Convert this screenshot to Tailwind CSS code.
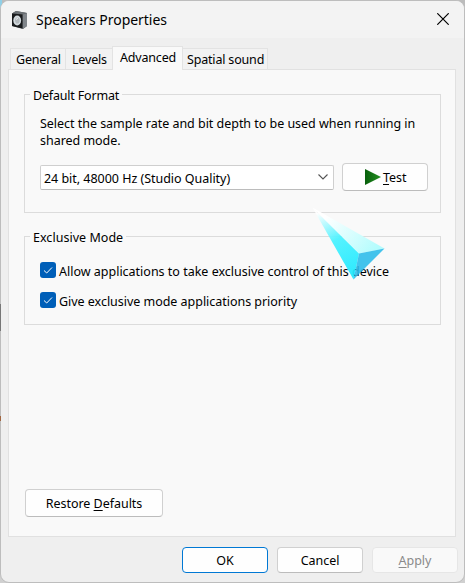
<!DOCTYPE html>
<html lang="en">
<head>
<meta charset="utf-8">
<title>Speakers Properties</title>
<script src="https://cdn.jsdelivr.net/npm/@tailwindcss/browser@4"></script>
</head>
<body class="w-[465px] h-[583px] overflow-hidden bg-[#c9c9c9] font-['Noto_Sans',sans-serif] text-[12.5px] leading-[17px] tracking-[-0.03px] text-black">
<div class="relative w-[465px] h-[583px] bg-linear-to-b from-[#bcbcbc] to-[#d0d0d0]">
  <!-- slivers of the desktop behind the window -->
  <div class="absolute left-0 top-0 w-[2px] h-[28px] bg-[#8fd0e8]"></div>
  <main class="absolute left-0 top-0 w-[465px] h-[583px] rounded-[9px] border border-[#bdbdbd] bg-[#efefef] overflow-hidden flex flex-col">
    <header class="h-[37px] shrink-0 bg-[#f3f3f3] flex items-center pl-[11px] pr-[15px]">
      <svg class="w-[16px] h-[18px] shrink-0" viewBox="0 0 16 18">
        <path d="M0 2.500 4 0 15 2v13l-4 3L0 15z" fill="#55585b"/>
        <path d="M10.500 3.500 15 2v13l-4.500 3z" fill="#80858a"/>
        <path d="M0 2.500 4 0 15 2 10.500 3.500z" fill="#6b7074"/>
        <path d="M0 2.500 10.500 3.500V17.500L0 15z" fill="#191b1d"/>
        <ellipse cx="5.2" cy="9.500" rx="3.900" ry="5" fill="#d3dade"/>
        <ellipse cx="5.400" cy="9.500" rx="2.300" ry="3.100" fill="#b2b8bc"/>
        <path d="M4 8.500 6 7" stroke="#eee"/>
      </svg>
      <h1 class="ml-[8px] mt-px text-[14px] leading-[20px] tracking-[-0.03px] whitespace-nowrap">Speakers Properties</h1>
      <svg class="ml-auto mb-px w-[12px] h-[12px]" viewBox="0 0 12 12" fill="none" stroke="#000" stroke-width="1.2"><path d="M.3.3l11.4 11.4M11.7.3.3 11.7"/></svg>
    </header>
    <nav class="relative z-10 h-[32px] -mb-px shrink-0 pl-[9px] flex items-end whitespace-nowrap tracking-[-0.18px]">
      <div class="w-[55px] h-[21px] mb-px bg-[#f2f2f2] border-t border-l border-[#e3e3e3] pl-[5px] pt-[2px]">General</div>
      <div class="w-[47px] h-[21px] mb-px bg-[#f2f2f2] border-t border-l border-[#e3e3e3] pl-[6px] pt-[2px]">Levels</div>
      <div class="w-[71px] h-[24px] bg-[#f9f9f9] border-t border-x border-[#e3e3e3] pl-[7px] pt-[2px]">Advanced</div>
      <div class="w-[85px] h-[21px] mb-px bg-[#f2f2f2] border-t border-r border-[#e3e3e3] pl-[4px] pt-[2px]">Spatial sound</div>
    </nav>
    <section class="ml-[7px] w-[448px] h-[468px] shrink-0 bg-[#f9f9f9] border border-[#e1e1e1] px-[15px] pt-[24px] flex flex-col">
      <div class="relative w-[417px] h-[119px] shrink-0 border border-[#dcdcdc] pl-[15px] pt-[20px]">
        <h2 class="absolute left-[5px] top-[-8px] px-[3px] bg-[#f9f9f9] whitespace-nowrap tracking-[-0.18px]">Default Format</h2>
        <p class="whitespace-nowrap">Select the sample rate and bit depth to be used when running in<br>shared mode.</p>
        <div class="mt-[14px] flex items-center gap-[8px]">
          <div class="w-[294px] h-[25px] rounded-[2px] border border-[#cfcfcf] border-b-[#bcbcbc] bg-white pl-[3px] pr-[5px] flex items-center justify-between whitespace-nowrap">
            <span class="pt-[2px]">24 bit, 48000 Hz (Studio Quality)</span>
            <svg class="w-[10px] h-[6px]" viewBox="0 0 10 6" fill="none" stroke="#555" stroke-width="1.1"><path d="M.5.5 5 5 9.5.5"/></svg>
          </div>
          <button class="w-[86px] h-[28px] rounded-[4px] border border-[#d0d0d0] border-b-[#bcbcbc] bg-[#fefefe] flex items-center pl-[22px]">
            <svg class="w-[16px] h-[16px]" viewBox="0 0 16 16"><defs><linearGradient id="play"><stop stop-color="#075f0b"/><stop offset="1" stop-color="#259021"/></linearGradient></defs><path d="M0 0 16 8 0 16z" fill="url(#play)"/></svg>
            <span class="ml-[2px]"><span class="underline underline-offset-2">T</span>est</span>
          </button>
        </div>
      </div>
      <div class="relative mt-[23px] w-[417px] h-[89px] shrink-0 border border-[#dcdcdc] pl-[15px] pt-[25px] flex flex-col gap-[14px]">
        <h2 class="absolute left-[5px] top-[-8px] px-[3px] bg-[#f9f9f9] whitespace-nowrap tracking-[0.03px]">Exclusive Mode</h2>
        <label class="h-[16px] flex items-center gap-[3px] whitespace-nowrap tracking-[-0.005px]">
          <svg class="w-[16px] h-[16px] shrink-0" viewBox="0 0 16 16"><rect width="16" height="16" rx="3" fill="#005fb8"/><path d="M4 8.5 6.7 11 12 5.5" fill="none" stroke="#fff"/></svg>
          <span class="pt-[2px]">Allow applications to take exclusive control of this device</span>
        </label>
        <label class="h-[16px] flex items-center gap-[3px] whitespace-nowrap">
          <svg class="w-[16px] h-[16px] shrink-0" viewBox="0 0 16 16"><rect width="16" height="16" rx="3" fill="#005fb8"/><path d="M4 8.5 6.7 11 12 5.5" fill="none" stroke="#fff"/></svg>
          <span class="pt-[2px]">Give exclusive mode applications priority</span>
        </label>
      </div>
      <button class="mt-auto mb-[19px] ml-[1px] w-[138px] h-[28px] shrink-0 rounded-[4px] border border-[#d0d0d0] border-b-[#bcbcbc] bg-[#fefefe] whitespace-nowrap"><span>Restore <span class="underline underline-offset-2">D</span>efaults</span></button>
    </section>
    <footer class="flex justify-end gap-[9px] pt-[10px] pr-[6px]">
      <button class="w-[86px] h-[26px] rounded-[4px] border border-[#0078d4] bg-[#fefefe]">OK</button>
      <button class="w-[86px] h-[26px] rounded-[4px] border border-[#d0d0d0] border-b-[#bcbcbc] bg-[#fefefe]">Cancel</button>
      <button class="w-[86px] h-[26px] rounded-[4px] border border-[#e6e6e6] bg-[#f9f9f9] text-[#8a8a8a]"><span class="underline underline-offset-2">A</span>pply</button>
    </footer>
  </main>
  <!-- window edge fragments of the desktop -->
  <div class="absolute left-0 top-[304px] w-[1px] h-[27px] bg-[#777]"></div>
  <div class="absolute left-0 top-[416px] w-[1px] h-[5px] bg-[#a06540]"></div>
  <svg class="absolute left-[312px] top-[207px] w-[74px] h-[74px]" viewBox="312 207 74 74">
    <defs>
      <linearGradient id="wing" gradientUnits="userSpaceOnUse" x1="314" y1="208" x2="372" y2="254"><stop offset=".2" stop-color="#fff"/><stop offset="1" stop-color="#b4fcfd"/></linearGradient>
      <linearGradient id="side" gradientUnits="userSpaceOnUse" x1="314" y1="208" x2="352" y2="275"><stop offset=".08" stop-color="#fff"/><stop offset=".5" stop-color="#48f2ff"/><stop offset="1" stop-color="#20e9ff"/></linearGradient>
    </defs>
    <path d="M312.500 207.500 359 253.500 353.500 279.500z" fill="url(#side)" fill-opacity=".93"/>
    <path d="M312.500 207.500 384.500 248.500 359 253.500z" fill="url(#wing)"/>
    <path d="M359 253.500 384.500 248.500 353.500 279.500z" fill="#29bbe9" fill-opacity=".88"/>
  </svg>
</div>
</body>
</html>
